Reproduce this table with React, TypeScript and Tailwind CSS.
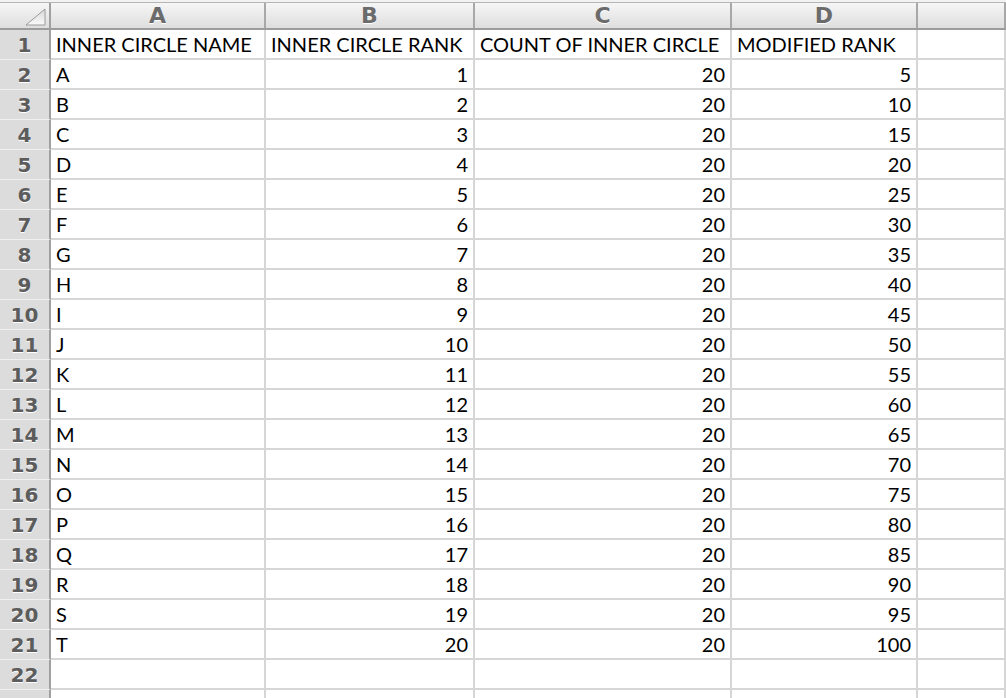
const rows = Array.from({ length: 20 }, (_, i) => ({
  name: String.fromCharCode(65 + i),
  rank: i + 1,
  count: 20,
  modified: (i + 1) * 5,
}));

const cols = ["A", "B", "C", "D", ""];
const grid = "grid grid-cols-[51px_215px_209px_257px_186px_1fr]";
const cellFont = { fontFamily: "Lato, 'Open Sans', sans-serif" };
const headFont = { fontFamily: "'DejaVu Sans', sans-serif", textShadow: "0 1px 0 #fff" };

function RowHead({ n }: { n: number }) {
  return (
    <div
      className="h-[30px] flex items-center justify-center bg-[#dcdcdc] border-r-2 border-r-[#a0a0a0] border-b border-b-[#f0f0f0] text-[20px] font-bold text-[#5c5c5c] whitespace-nowrap"
      style={headFont}
    >
      {n}
    </div>
  );
}

function Cell({ children, right }: { children?: React.ReactNode; right?: boolean }) {
  return (
    <div
      className={
        "h-[30px] flex items-center px-[5px] border-r-2 border-b-2 border-[#d6d6d6] text-[20px] text-black bg-white whitespace-nowrap " +
        (right ? "justify-end" : "justify-start")
      }
      style={cellFont}
    >
      {children}
    </div>
  );
}

export default function App() {
  return (
    <div className="w-[1006px] h-[698px] overflow-hidden bg-white">
      <div className="h-[3px] bg-[#f2f2f2] border-b border-[#b5b5b5]" />
      <div className={grid + " h-[27px] bg-gradient-to-b from-[#f6f6f6] to-[#dedede] border-b-2 border-[#9c9c9c]"}>
        <div className="relative border-r-2 border-[#a0a0a0]">
          <svg className="absolute right-[3px] bottom-[2px]" width="21" height="18" viewBox="0 0 21 18">
            <defs>
              <linearGradient id="tri" x1="0" y1="0" x2="0" y2="1">
                <stop offset="0" stopColor="#d8d8d8" />
                <stop offset="1" stopColor="#fafafa" />
              </linearGradient>
            </defs>
            <polygon points="20,1 20,17 1,17" fill="url(#tri)" stroke="#9a9a9a" strokeWidth="1" />
          </svg>
        </div>
        {cols.map((c, i) => (
          <div
            key={i}
            className="flex items-center justify-center border-r-2 border-[#a8a8a8] text-[22px] font-bold text-[#6b6b6b] leading-none"
            style={headFont}
          >
            {c}
          </div>
        ))}
      </div>
      <div className={grid}>
        <RowHead n={1} />
        <Cell>INNER CIRCLE NAME</Cell>
        <Cell>INNER CIRCLE RANK</Cell>
        <Cell>COUNT OF INNER CIRCLE</Cell>
        <Cell>MODIFIED RANK</Cell>
        <Cell />
        {rows.map((r, i) => (
          <div key={r.name} className="contents">
            <RowHead n={i + 2} />
            <Cell>{r.name}</Cell>
            <Cell right>{r.rank}</Cell>
            <Cell right>{r.count}</Cell>
            <Cell right>{r.modified}</Cell>
            <Cell />
          </div>
        ))}
        {[22, 23].map((n) => (
          <div key={n} className="contents">
            <RowHead n={n} />
            <Cell />
            <Cell />
            <Cell />
            <Cell />
            <Cell />
          </div>
        ))}
      </div>
    </div>
  );
}
